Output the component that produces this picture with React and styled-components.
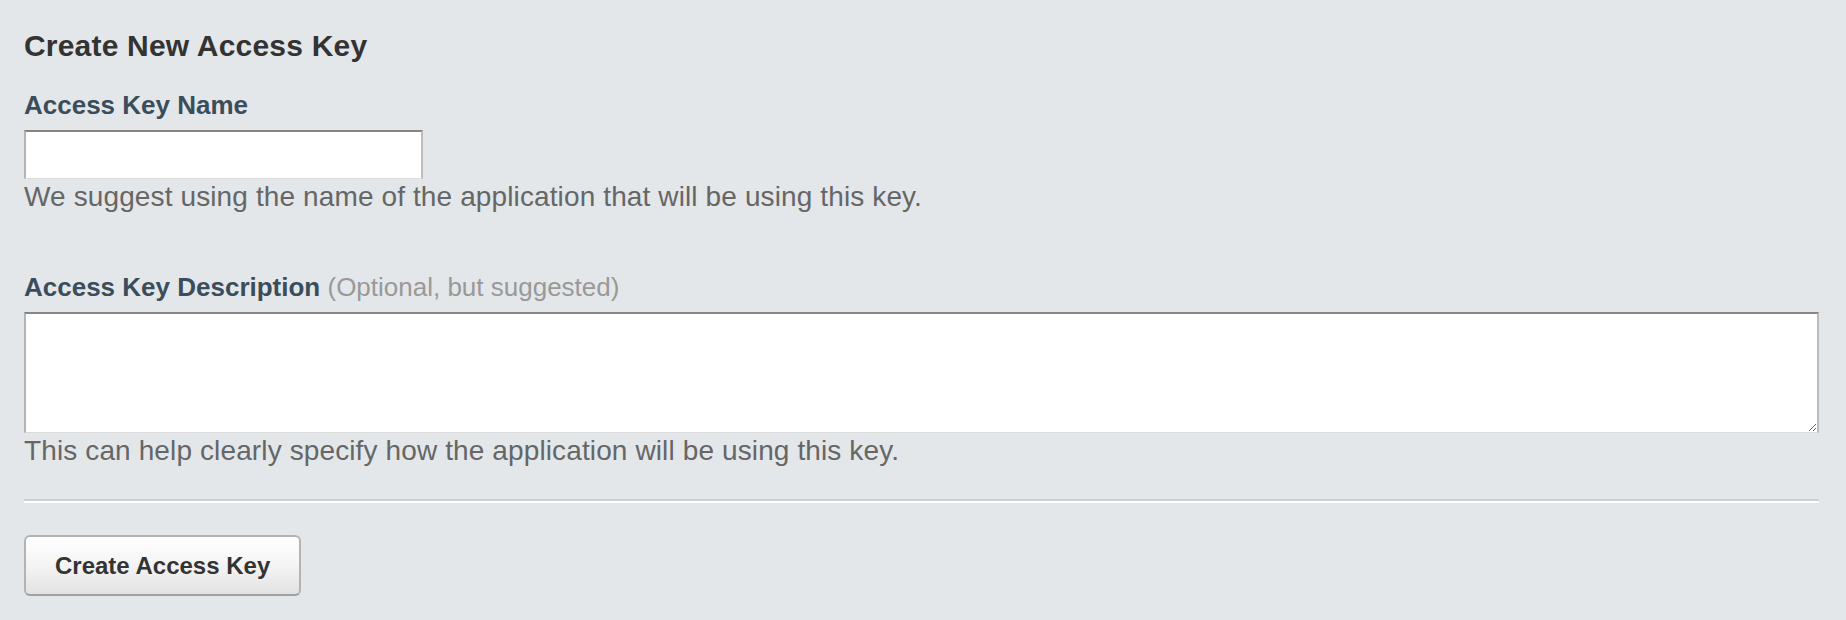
import React from "react";
import styled, { createGlobalStyle } from "styled-components";

const GlobalStyle = createGlobalStyle`
  html, body {
    margin: 0;
    padding: 0;
    background: #e3e7ea;
  }
  body {
    font-family: "Liberation Sans", Arial, Helvetica, sans-serif;
  }
  * { box-sizing: border-box; }
`;

const Page = styled.form`
  padding: 28px 27px 24px 24px;
  display: flex;
  flex-direction: column;
`;

const Title = styled.h2`
  margin: 0 0 26px;
  font-size: 30px;
  line-height: 36px;
  font-weight: 700;
  letter-spacing: 0.2px;
  color: #333333;
`;

const Field = styled.div`
  display: flex;
  flex-direction: column;
  align-items: flex-start;
  margin-bottom: ${(p) => p.$gap || 0}px;
`;

const Label = styled.label`
  font-size: 26px;
  line-height: 30px;
  font-weight: 700;
  color: #3b4d5a;
  margin-bottom: 10px;
`;

const Optional = styled.span`
  font-weight: 400;
  color: #999999;
`;

const fieldBorder = `
  background: #ffffff;
  border-style: solid;
  border-color: #858585 #bcbcbc #dcdcdc #b4b4b4;
  border-width: 2px 2px 1px 2px;
  border-radius: 0;
  outline: none;
  font-family: "Liberation Sans", Arial, sans-serif;
  font-size: 26px;
  color: #333;
  margin: 0;
`;

const TextInput = styled.input`
  ${fieldBorder}
  width: 399px;
  height: 49px;
  padding: 4px 8px;
`;

const TextArea = styled.textarea`
  ${fieldBorder}
  width: 100%;
  height: 121px;
  padding: 6px 8px;
  resize: vertical;
  display: block;
`;

const Help = styled.p`
  margin: 2px 0 0;
  font-size: 28px;
  line-height: 32px;
  letter-spacing: 0.12px;
  color: #666666;
`;

const Divider = styled.hr`
  margin: 32px 0 32px;
  border: 0;
  border-top: 2px solid #cbd0d4;
  border-bottom: 2px solid #ffffff;
  height: 0;
  width: 100%;
`;

const Button = styled.button`
  align-self: flex-start;
  height: 61px;
  padding: 0 29px;
  font-family: "Liberation Sans", Arial, sans-serif;
  font-size: 24px;
  font-weight: 700;
  color: #333333;
  background: linear-gradient(to bottom, #ffffff 0%, #f4f4f4 50%, #e2e2e2 100%);
  border: 2px solid #b3b3b3;
  border-bottom-color: #a0a0a0;
  border-radius: 6px;
  box-shadow: inset 0 1px 0 #ffffff;
  cursor: pointer;
`;

export default function App() {
  return (
    <>
      <GlobalStyle />
      <Page onSubmit={(e) => e.preventDefault()}>
        <Title>Create New Access Key</Title>
        <Field $gap={59}>
          <Label htmlFor="key-name">Access Key Name</Label>
          <TextInput id="key-name" type="text" />
          <Help>We suggest using the name of the application that will be using this key.</Help>
        </Field>
        <Field>
          <Label htmlFor="key-desc">
            Access Key Description <Optional>(Optional, but suggested)</Optional>
          </Label>
          <TextArea id="key-desc" />
          <Help>This can help clearly specify how the application will be using this key.</Help>
        </Field>
        <Divider />
        <Button type="submit">Create Access Key</Button>
      </Page>
    </>
  );
}
